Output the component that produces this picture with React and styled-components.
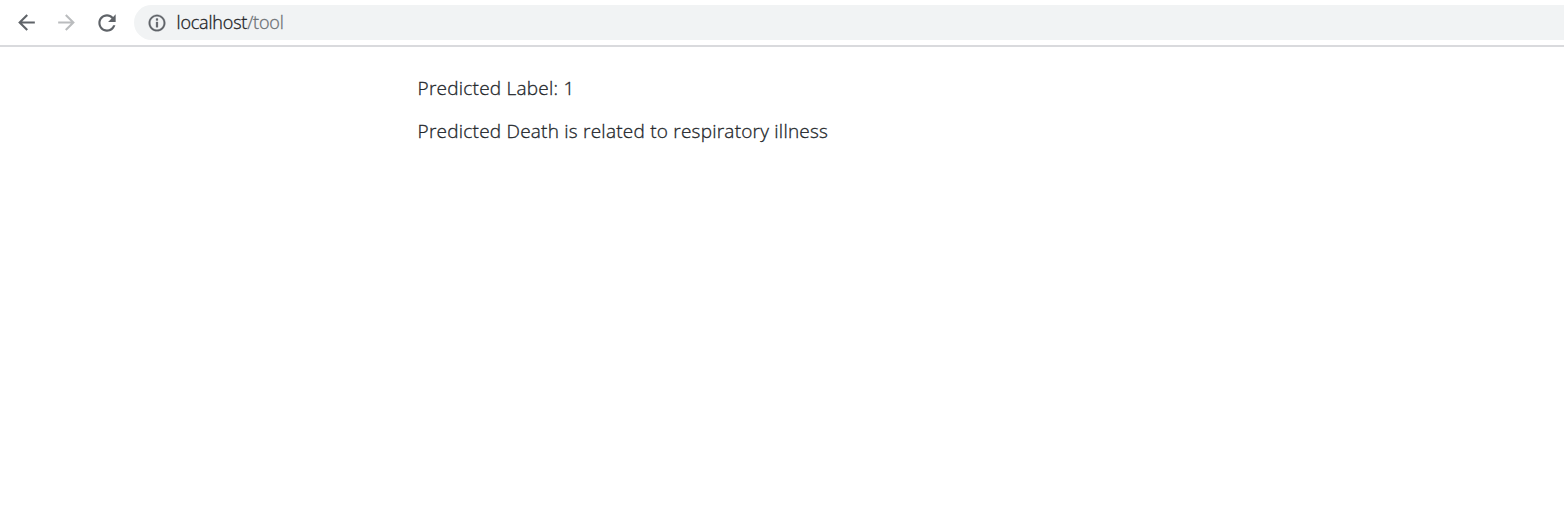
import React from "react";
import styled, { createGlobalStyle } from "styled-components";

const GlobalStyle = createGlobalStyle`
  * { box-sizing: border-box; }
  body { margin: 0; background: #fff; overflow: hidden; }
`;
const Page = styled.div`
  min-height: 532px;
  font-family: "Open Sans", "Noto Sans", sans-serif;
  font-weight: 300;
  -webkit-text-stroke-width: 0.3px;
`;
const Toolbar = styled.header`
  display: flex;
  align-items: flex-start;
  height: 47px;
  padding: 5px 0 0 8px;
  border-bottom: 2px solid #d9dadd;
`;
const NavButton = styled.button`
  display: flex;
  align-items: center;
  justify-content: center;
  width: ${(p) => p.$width || 36}px;
  height: 35px;
  margin-right: 4px;
  padding: 0;
  border: 0;
  background: none;
  color: ${(p) => (p.$muted ? "#babcbe" : "#5f6368")};
`;
const AddressBar = styled.div`
  display: flex;
  flex: 1;
  align-items: center;
  height: 35px;
  margin-left: 4px;
  padding-left: 13px;
  border-radius: 18px 0 0 18px;
  background: #f1f3f4;
  color: #5f6368;
`;
const Url = styled.span`
  margin-left: 9.5px;
  font-size: 18px;
  line-height: 35px;
  letter-spacing: -0.19px;
  white-space: nowrap;
  color: #6c7074;
`;
const Host = styled.span`
  color: #202124;
`;
const Content = styled.main`
  padding: 26px 0 0 417.6px;
`;
const Result = styled.p`
  width: max-content;
  margin: 0 0 13px;
  font-size: 19px;
  line-height: 30px;
  letter-spacing: 0.23px;
  color: #212529;
`;

const Icon = ({ d, size = 24, stroke = 0 }) => (
  <svg
    width={size}
    height={size}
    viewBox="0 0 24 24"
    fill="currentColor"
    stroke={stroke ? "currentColor" : "none"}
    strokeWidth={stroke}
    aria-hidden="true"
  >
    <path d={d} />
  </svg>
);

export default function App() {
  return (
    <Page>
      <GlobalStyle />
      <Toolbar>
        <NavButton aria-label="Back">
          <Icon size={25} d="M20 11H7.83l5.59-5.59L12 4l-8 8 8 8 1.41-1.41L7.83 13H20v-2z" />
        </NavButton>
        <NavButton aria-label="Forward" $muted>
          <Icon size={25} d="M12 4l-1.41 1.41L16.17 11H4v2h12.17l-5.58 5.59L12 20l8-8z" />
        </NavButton>
        <NavButton aria-label="Reload" $width={38}>
          <Icon size={26} d="M17.65 6.35C16.2 4.9 14.21 4 12 4c-4.42 0-7.99 3.58-7.99 8s3.57 8 7.99 8c3.73 0 6.84-2.55 7.73-6h-2.08c-.82 2.33-3.04 4-5.65 4-3.31 0-6-2.69-6-6s2.69-6 6-6c1.66 0 3.14.69 4.22 1.78L13 11h7V4l-2.35 2.35z" />
        </NavButton>
        <AddressBar>
          <Icon size={20} stroke={0.35} d="M10.9 6.7h2.2v2.2h-2.2zm0 4h2.2v6.5h-2.2zM12 2C6.48 2 2 6.48 2 12s4.48 10 10 10 10-4.48 10-10S17.52 2 12 2zm0 18c-4.41 0-8-3.59-8-8s3.59-8 8-8 8 3.59 8 8-3.59 8-8 8z" />
          <Url><Host>localhost</Host>/tool</Url>
        </AddressBar>
      </Toolbar>
      <Content>
        <Result>Predicted Label: 1</Result>
        <Result>Predicted Death is related to respiratory illness</Result>
      </Content>
    </Page>
  );
}
